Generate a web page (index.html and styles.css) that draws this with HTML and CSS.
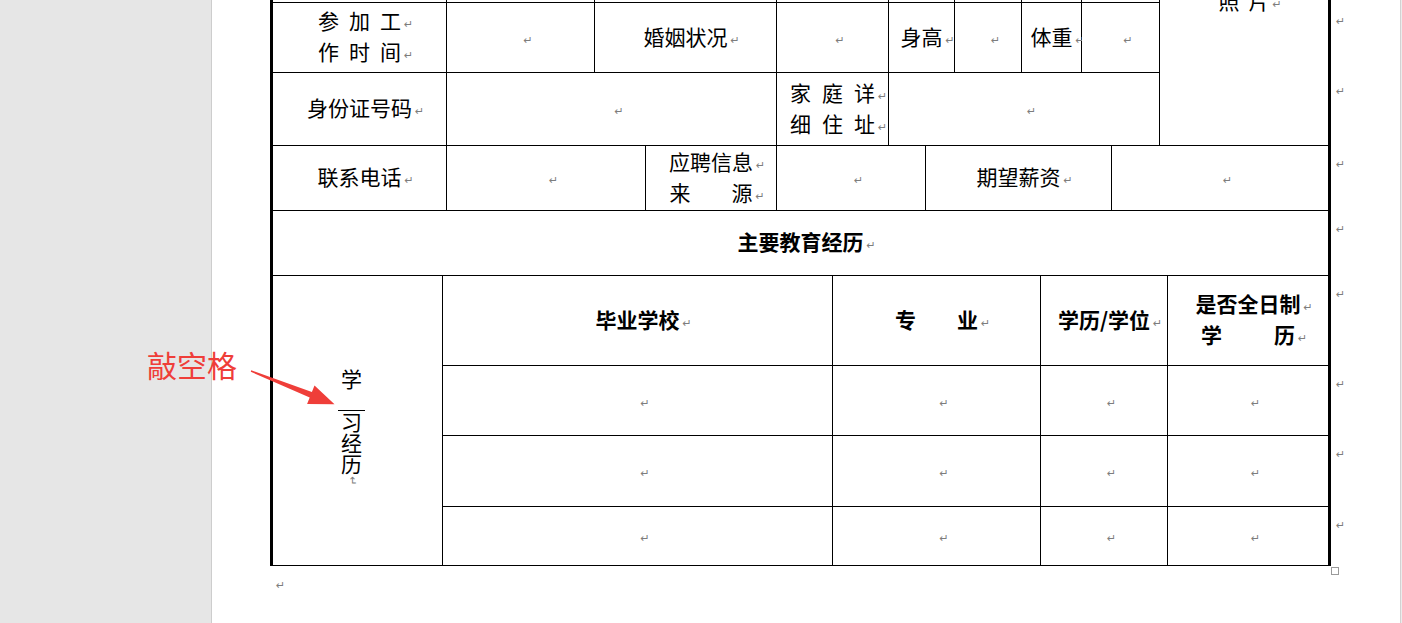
FILE: index.html
```html
<!DOCTYPE html>
<html lang="zh-CN">
<head>
<meta charset="utf-8">
<title>应聘登记表</title>
<link rel="stylesheet" href="styles.css">
</head>
<body>
<div class="screen">
  <div class="gutter"></div>
  <div class="page">
    <div class="doc">
      <div class="form">
        <!-- row 0 (cut off above) -->
        <div class="c w2"></div>
        <div class="c w1"></div>
        <div class="c w2"></div>
        <div class="c w2"></div>
        <div class="c w2"></div>
        <div class="c w1"></div>
        <div class="c w2"></div>
        <div class="c w2"></div>
        <div class="c w2 tall3 photo"><div><span class="ls9">照</span>片<span class="pm">↵</span></div></div>
        <!-- row 1 -->
        <div class="c w2"><div><span class="ls10">参加</span>工<span class="pm">↵</span></div><div><span class="ls10">作时</span>间<span class="pm">↵</span></div></div>
        <div class="c w1"><div><span class="pm">↵</span></div></div>
        <div class="c w2"><div>婚姻状况<span class="pm">↵</span></div></div>
        <div class="c w2"><div><span class="pm">↵</span></div></div>
        <div class="c w2"><div>身高<span class="pm">↵</span></div></div>
        <div class="c w1"><div><span class="pm">↵</span></div></div>
        <div class="c w2"><div>体重<span class="pm">↵</span></div></div>
        <div class="c w2"><div><span class="pm">↵</span></div></div>
        <!-- row 2 -->
        <div class="c w2"><div>身份证号码<span class="pm">↵</span></div></div>
        <div class="c w3"><div><span class="pm">↵</span></div></div>
        <div class="c w2"><div><span class="ls11">家庭</span>详<span class="pm">↵</span></div><div><span class="ls11">细住</span>址<span class="pm">↵</span></div></div>
        <div class="c w7"><div><span class="pm">↵</span></div></div>
        <!-- row 3 -->
        <div class="c w2"><div>联系电话<span class="pm">↵</span></div></div>
        <div class="c w2"><div><span class="pm">↵</span></div></div>
        <div class="c w1"><div>应聘信息<span class="pm">↵</span></div><div><span class="ls41">来</span>源<span class="pm">↵</span></div></div>
        <div class="c w3"><div><span class="pm">↵</span></div></div>
        <div class="c w5"><div>期望薪资<span class="pm">↵</span></div></div>
        <div class="c w3"><div><span class="pm">↵</span></div></div>
        <!-- row 4 -->
        <div class="c w16 b"><div>主要教育经历<span class="pm">↵</span></div></div>
        <!-- row 5 -->
        <div class="c w1 tall4 vert">
          <span class="ch">学</span>
          <span class="gap"></span>
          <span class="ch">习</span>
          <span class="ch">经</span>
          <span class="ch">历</span>
          <span class="vpm">↵</span>
        </div>
        <div class="c w5 b"><div>毕业学校<span class="pm">↵</span></div></div>
        <div class="c w5 b"><div><span class="ls41">专</span>业<span class="pm">↵</span></div></div>
        <div class="c w4 b"><div>学历/学位<span class="pm">↵</span></div></div>
        <div class="c w1 b"><div>是否全日制<span class="pm">↵</span></div><div><span class="ls52">学</span>历<span class="pm">↵</span></div></div>
        <!-- row 6 -->
        <div class="c w5"><div><span class="pm">↵</span></div></div>
        <div class="c w5"><div><span class="pm">↵</span></div></div>
        <div class="c w4"><div><span class="pm">↵</span></div></div>
        <div class="c w1"><div><span class="pm">↵</span></div></div>
        <!-- row 7 -->
        <div class="c w5"><div><span class="pm">↵</span></div></div>
        <div class="c w5"><div><span class="pm">↵</span></div></div>
        <div class="c w4"><div><span class="pm">↵</span></div></div>
        <div class="c w1"><div><span class="pm">↵</span></div></div>
        <!-- row 8 -->
        <div class="c w5"><div><span class="pm">↵</span></div></div>
        <div class="c w5"><div><span class="pm">↵</span></div></div>
        <div class="c w4"><div><span class="pm">↵</span></div></div>
        <div class="c w1"><div><span class="pm">↵</span></div></div>
        <span class="handle"></span>
      </div>
      <div class="endmarks">
        <span>↵</span><span>↵</span><span>↵</span><span>↵</span><span>↵</span><span>↵</span><span>↵</span><span>↵</span><span>↵</span>
      </div>
    </div>
    <div class="trail">↵</div>
  </div>
  <div class="edge"></div>
  <div class="rest"></div>

  <div class="note">敲空格</div>
  <svg class="arrow" width="100" height="50" viewBox="0 0 100 50" aria-hidden="true">
    <polygon points="11.2,10.2 71.9,32 74.5,25.5 94.5,44.3 67.1,44.1 69.7,37.6 10.8,11.8" fill="#ef3e39"/>
  </svg>
</div>
</body>
</html>
```

FILE: styles.css
```css
html, body {
  margin: 0;
  padding: 0;
  background: #ffffff;
}

.screen {
  position: relative;
  display: flex;
  width: 1402px;
  height: 623px;
  overflow: hidden;
  font-family: "Noto Sans CJK SC", "Noto Sans", sans-serif;
}

.gutter {
  flex: none;
  width: 211px;
  background: #e6e6e6;
  border-right: 1px solid #cdcdcd;
}

.page {
  flex: none;
  width: 1188px;
  background: #ffffff;
  padding-left: 58px;
  box-sizing: border-box;
}

.edge {
  flex: none;
  width: 1px;
  background: #d2d2d2;
}

.rest {
  flex: 1;
  background: #ececec;
}

.doc {
  display: flex;
  align-items: flex-start;
  margin-top: -59px;
}

.form {
  position: relative;
  display: grid;
  grid-template-columns: 169px 3px 147px 50px 130px 55px 55px 36px 28px 66px 18px 40px 29px 47px 7px 160px;
  grid-template-rows: 61px 69px 72px 64px 64px 89px 69px 70px 58px;
  gap: 1px;
  background: #000000;
  border-left: 3px solid #000000;
  border-right: 3px solid #000000;
  border-bottom: 1px solid #000000;
}

.c {
  background: #ffffff;
  display: flex;
  flex-direction: column;
  align-items: center;
  justify-content: center;
  font-size: 21px;
  line-height: 31px;
  padding-bottom: 3px;
  color: #000000;
  white-space: nowrap;
}

.b { font-weight: 700; }

.w1 { grid-column: span 1; }
.w2 { grid-column: span 2; }
.w3 { grid-column: span 3; }
.w4 { grid-column: span 4; }
.w5 { grid-column: span 5; }
.w7 { grid-column: span 7; }
.w16 { grid-column: span 16; }
.tall3 { grid-row: span 3; }
.tall4 { grid-row: span 4; }

.ls9 { letter-spacing: 9px; }
.ls10 { letter-spacing: 10px; }
.ls11 { letter-spacing: 11px; }
.ls41 { letter-spacing: 41px; }
.ls52 { letter-spacing: 52px; }

.photo {
  justify-content: flex-start;
  padding-top: 44px;
}

/* paragraph mark: zero width so it does not shift centred text */
.pm {
  display: inline-block;
  width: 0;
  text-indent: 3px;
  font-family: "DejaVu Sans", sans-serif;
  font-size: 11px;
  line-height: 10px;
  font-weight: 400;
  color: #7d7d7d;
  letter-spacing: 0;
  white-space: nowrap;
  vertical-align: 1px;
}

.vert {
  justify-content: center;
  padding-right: 12px;
  padding-top: 13px;
  padding-bottom: 0;
  line-height: 21px;
}

.vert .ch {
  display: block;
  height: 21px;
}

.vert .gap {
  display: block;
  width: 27px;
  height: 21px;
  border-bottom: 1px solid #000000;
}

.vert .vpm {
  display: block;
  margin-top: 2px;
  font-family: "DejaVu Sans", sans-serif;
  font-size: 11px;
  line-height: 10px;
  color: #7d7d7d;
  transform: rotate(90deg);
}

.handle {
  position: absolute;
  right: -11px;
  bottom: -10px;
  width: 6px;
  height: 6px;
  border: 1px solid #9a9a9a;
  background: #ffffff;
}

.endmarks {
  display: grid;
  grid-template-rows: 61px 69px 72px 64px 64px 89px 69px 70px 58px;
  row-gap: 1px;
  padding-left: 5px;
  font-family: "DejaVu Sans", sans-serif;
  font-size: 11px;
  line-height: 12px;
  color: #7d7d7d;
}

.endmarks span {
  padding-top: 13px;
}

.trail {
  padding-left: 6px;
  padding-top: 14px;
  font-family: "DejaVu Sans", sans-serif;
  font-size: 11px;
  line-height: 12px;
  color: #7d7d7d;
}

.note {
  position: absolute;
  left: 147px;
  top: 344px;
  font-size: 30px;
  line-height: 40px;
  color: #ef3e39;
  white-space: nowrap;
}

.arrow {
  position: absolute;
  left: 240px;
  top: 360px;
}
```
